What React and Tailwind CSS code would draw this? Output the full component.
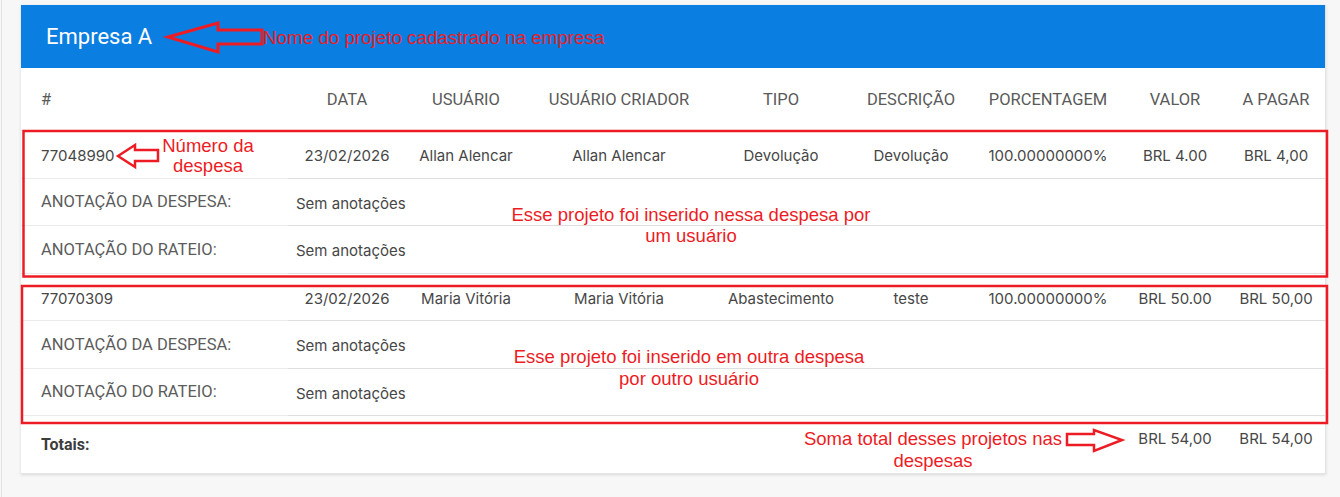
import React from 'react';

// Projeto por empresa: despesas onde o projeto foi rateado, com notas em vermelho por cima.
const cols = 'grid grid-cols-[267px_118px_120px_186px_138px_122px_152px_102px_100px]';

const despesas = [
  {
    id: '77048990', data: '23/02/2026', usuario: 'Allan Alencar', criador: 'Allan Alencar',
    tipo: 'Devolução', descricao: 'Devolução', pct: '100.00000000%', valor: 'BRL 4.00', pagar: 'BRL 4,00',
  },
  {
    id: '77070309', data: '23/02/2026', usuario: 'Maria Vitória', criador: 'Maria Vitória',
    tipo: 'Abastecimento', descricao: 'teste', pct: '100.00000000%', valor: 'BRL 50.00', pagar: 'BRL 50,00',
  },
];

const headers = ['DATA', 'USUÁRIO', 'USUÁRIO CRIADOR', 'TIPO', 'DESCRIÇÃO', 'PORCENTAGEM', 'VALOR', 'A PAGAR'];

const roboto = "font-['Roboto',sans-serif]";
const inter = "font-['Inter',sans-serif]";
const arial = "font-['Liberation_Sans',Arial,sans-serif]";

function LinhaDespesa({ d }) {
  const cel = 'flex items-center justify-center pt-[4px] border-b border-[#dedede]';
  return (
    <>
      <div className={`${cols} h-[47.5px] text-[15px] text-[#474747] ${inter}`}>
        <div className="flex items-center pl-5 pt-[4px] border-b border-[#ebebeb]">{d.id}</div>
        <div className={cel}>{d.data}</div>
        <div className={cel}>{d.usuario}</div>
        <div className={cel}>{d.criador}</div>
        <div className={cel}>{d.tipo}</div>
        <div className={cel}>{d.descricao}</div>
        <div className={cel}>{d.pct}</div>
        <div className={cel}>{d.valor}</div>
        <div className={cel}>{d.pagar}</div>
      </div>
      {['ANOTAÇÃO DA DESPESA:', 'ANOTAÇÃO DO RATEIO:'].map((rotulo) => (
        <div key={rotulo} className="grid grid-cols-[267px_1fr] h-[47.5px]">
          <div className={`flex items-center pl-5 pt-[2px] border-b border-[#ebebeb] text-[16.5px] text-[#5c5c5c] ${roboto}`}>
            {rotulo}
          </div>
          <div className={`flex items-center pl-2 pt-[4px] border-b border-[#dedede] text-[15px] text-[#474747] ${inter}`}>
            Sem anotações
          </div>
        </div>
      ))}
    </>
  );
}

export default function App() {
  return (
    <div className="relative w-[1340px] h-[497px] bg-[#f7f7f7] overflow-hidden">
      <div className="h-full ml-[1px] border-l border-[#e2e2e2] pt-[5px] pl-[19px]">
        <div className="w-[1305px] bg-white border-r border-b border-[#e4e4e4] shadow-[0_1px_3px_rgba(0,0,0,0.12)]">
          <div className={`h-[63px] bg-[#0b7ee1] flex items-center pl-[25px] text-white text-[22px] ${roboto}`}>
            Empresa A
          </div>

          <div className={`${cols} h-[63px] border-b border-[#dedede] text-[16.5px] text-[#5a5a5a] ${roboto}`}>
            <div className="flex items-center pl-5 pt-[2px]">#</div>
            {headers.map((h) => (
              <div key={h} className="flex items-center justify-center pt-[2px]">{h}</div>
            ))}
          </div>

          {despesas.map((d) => <LinhaDespesa key={d.id} d={d} />)}

          <div className={`${cols} h-[57px]`}>
            <div className={`pl-5 pt-[17px] text-[16px] font-bold text-[#3d3d3d] ${roboto}`}>Totais:</div>
            <div /><div /><div /><div /><div /><div />
            <div className={`text-center pt-[12px] text-[15px] text-[#474747] ${inter}`}>BRL 54,00</div>
            <div className={`text-center pt-[12px] text-[15px] text-[#474747] ${inter}`}>BRL 54,00</div>
          </div>
        </div>
      </div>

      {/* camada de anotações */}
      <svg className="absolute left-0 top-0 pointer-events-none" width="1340" height="497" viewBox="0 0 1340 497">
        <g fill="none" stroke="#ed1c24" strokeWidth="2.5" strokeLinejoin="miter">
          <rect x="23.5" y="131" width="1303.5" height="145.5" />
          <rect x="22" y="286" width="1305" height="137" />
          <polygon points="168,37 218,23 218,30 262,30 262,44 218,44 218,52" strokeWidth="3" />
          <polygon points="118,156 135,145 135,150 158,150 158,161 135,161 135,167" />
          <polygon points="1067,434 1094,434 1094,430 1122,440 1094,451 1094,445 1067,445" />
        </g>
      </svg>

      <div className={`absolute left-[263px] top-[27px] text-[18.8px] leading-[21px] text-[#ed1c24] ${arial}`}>
        Nome do projeto cadastrado na empresa
      </div>
      <div className={`absolute left-[158px] top-[136px] w-[100px] text-center text-[18.5px] leading-[20px] text-[#ed1c24] ${arial}`}>
        Número da<br />despesa
      </div>
      <div className={`absolute left-[491px] top-[204px] w-[400px] text-center text-[18.5px] leading-[21px] text-[#ed1c24] ${arial}`}>
        Esse projeto foi inserido nessa despesa por<br />um usuário
      </div>
      <div className={`absolute left-[489px] top-[346px] w-[400px] text-center text-[18.5px] leading-[22px] text-[#ed1c24] ${arial}`}>
        Esse projeto foi inserido em outra despesa<br />por outro usuário
      </div>
      <div className={`absolute left-[783px] top-[428px] w-[300px] text-center text-[18.5px] leading-[22px] text-[#ed1c24] ${arial}`}>
        Soma total desses projetos nas<br />despesas
      </div>
    </div>
  );
}
